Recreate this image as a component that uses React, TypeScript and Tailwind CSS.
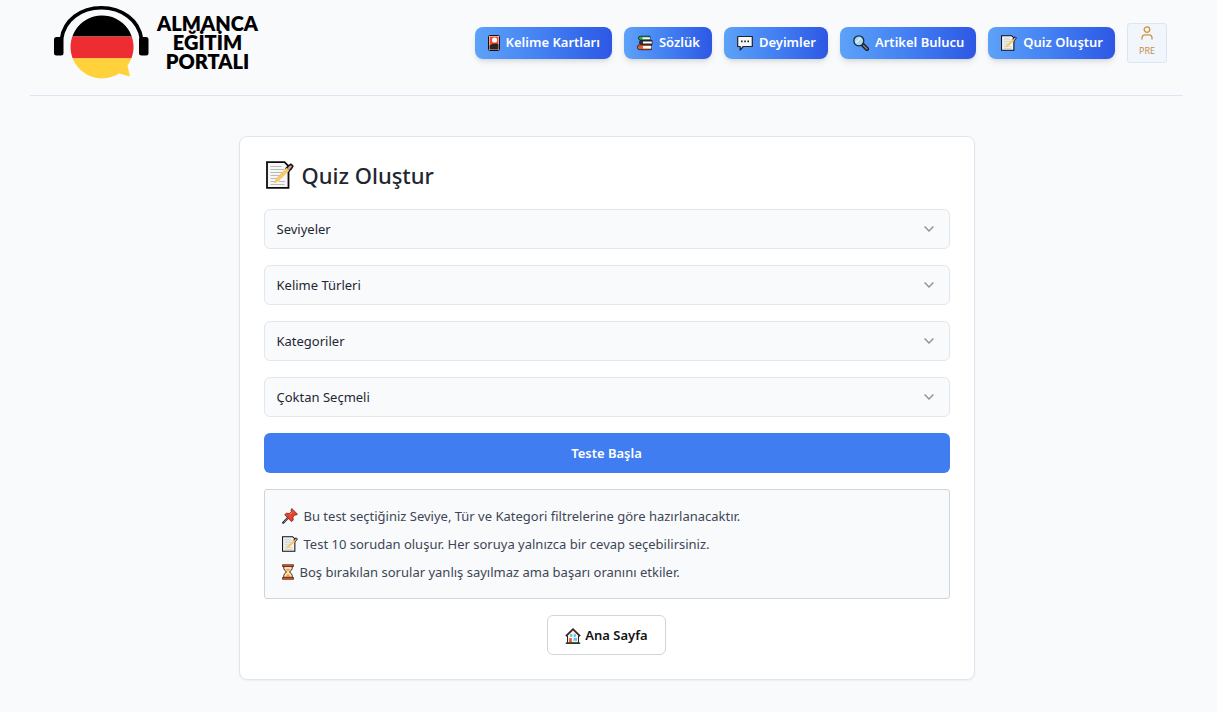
import React from 'react';

type IconProps = { className?: string };

function CardIcon({ className = '' }: IconProps) {
  return (
    <svg viewBox="0 0 12 16" className={className} aria-hidden="true">
      <rect x="0.5" y="0.5" width="11" height="15" rx="1" fill="#e8e4e2" stroke="#171312" />
      <rect x="1.6" y="1.6" width="8.8" height="12.8" fill="#ee4a2f" />
      <path d="M1.6 14.4V10.5Q5 7.6 10.4 9v5.4z" fill="#2b2525" />
      <circle cx="6.6" cy="5" r="2.6" fill="#fff" />
    </svg>
  );
}

function BooksIcon({ className = '' }: IconProps) {
  return (
    <svg viewBox="0 0 16 16" className={className} aria-hidden="true">
      <path d="M3.500 1.200h9.500v4H3.500a2 2 0 0 1 0-4z" fill="#2fa84f" stroke="#16181c" strokeWidth=".8" />
      <path d="M5.500 2.400H13v1.800H5.500z" fill="#fff" />
      <path d="M4.500 5.400H15v4.200H4.500a2 2 0 0 1 0-4.200z" fill="#27313f" stroke="#16181c" strokeWidth=".8" />
      <path d="M6 6.500h8.800v2H6z" fill="#fff" />
      <path d="M2.800 9.800h11.700v4.900H2.800a2.400 2.400 0 0 1 0-4.900z" fill="#ef5a2a" stroke="#16181c" strokeWidth=".8" />
      <path d="M6 11h8.300v2.500H6z" fill="#fff" />
    </svg>
  );
}

function SpeechIcon({ className = '' }: IconProps) {
  return (
    <svg viewBox="0 0 16 16" className={className} aria-hidden="true">
      <path d="M.7 1.500h14.600v10H6.200L3.200 15v-3.500H.7z" fill="#f8f8f8" stroke="#20232a" strokeWidth="1.200" strokeLinejoin="round" />
      <path d="M4 5.600h1.600v1.600H4zM7.200 5.600h1.600v1.600H7.200zM10.400 5.600H12v1.600h-1.600z" fill="#20232a" />
    </svg>
  );
}

function SearchIcon({ className = '' }: IconProps) {
  return (
    <svg viewBox="0 0 16 16" className={className} aria-hidden="true">
      <path d="M9 9l5 5" stroke="#17191d" strokeWidth="4" strokeLinecap="round" />
      <path d="M10.4 10.4l3.5 3.5" stroke="#77787c" strokeWidth="1.7" strokeLinecap="round" />
      <circle cx="5.8" cy="5.8" r="5" fill="#a5dcf5" stroke="#1d2733" strokeWidth="1.3" />
      <path d="M3 7.6L7.6 3" stroke="#d9f2fd" strokeWidth="1.6" />
    </svg>
  );
}

function MemoIcon({ className = '' }: IconProps) {
  return (
    <svg viewBox="0 0 28 28" className={className} aria-hidden="true">
      <path d="M1 1.2h17.500l4 4V26.800H1z" fill="#f6f6f6" stroke="#0c0c0c" strokeWidth="1.800" />
      <path d="M4.500 5.500h11M4.500 8.500h14M4.500 11.500h13M4.500 14.500h10M4.500 17.500h8M4.500 20.500h6M13 20.500h6M4.500 23.500h14" stroke="#b9b9bb" />
      <path d="M22.700 4.600l2.200-1.400 2 2-1.400 2.400-2.600 2.600-2.800-2.800z" fill="#c9a39c" stroke="#171313" strokeWidth="1.600" />
      <path d="M20.500 6.800l2.800 2.800L12.200 20.400 8 22.400l1.700-4.400z" fill="#f7c968" />
    </svg>
  );
}

function PinIcon({ className = '' }: IconProps) {
  return (
    <svg viewBox="0 0 16 16" className={className} aria-hidden="true">
      <path d="M6.300 9.400L1.200 14.800" stroke="#26282c" strokeWidth="2.200" strokeLinecap="round" />
      <path d="M5.800 10L1.600 14.400" stroke="#a9adb3" strokeWidth=".8" />
      <path d="M9.800.500l5.700 5.700-1.700.9-1-.2-1.900 2.200.4 2.800-1.700 1.800L2.700 6.800l1.700-1.600 2.900.4L9.300 3.600 9 2.200z" fill="#e8412c" stroke="#5a1a14" strokeWidth=".7" strokeLinejoin="round" />
      <path d="M7.600 6.500l3-2.600" stroke="#ff8c76" />
    </svg>
  );
}

function HourglassIcon({ className = '' }: IconProps) {
  return (
    <svg viewBox="0 0 12 16" className={className} aria-hidden="true">
      <path d="M1.800 2h8.400v2.500Q10 6.500 7.300 8q2.700 1.500 2.900 3.500V14H1.800v-2.500Q2 9.500 4.700 8 2 6.500 1.800 4.500z" fill="#fdeccb" stroke="#47241a" />
      <path d="M3 4.800h6L6 7.500zM6 9.500l3.200 3.700H2.800z" fill="#f6a623" />
      <path d="M.5.700h11v1.900H.5zM.5 13.400h11v1.900H.5z" fill="#e8552d" stroke="#3c1a12" strokeWidth=".7" />
    </svg>
  );
}

function HouseIcon({ className = '' }: IconProps) {
  return (
    <svg viewBox="0 0 16 16" className={className} aria-hidden="true">
      <path d="M2.500 7.500L8 2l5.500 5.500V15h-11z" fill="#f4f1ee" stroke="#2b2525" />
      <path d="M.9 8.200L8 1.300l7.100 6.900" fill="none" stroke="#2c1c1a" strokeWidth="1.700" />
      <path d="M2.500 7.200L8 1.900l5.500 5.300" fill="none" stroke="#c98674" strokeWidth=".5" />
      <path d="M4.200 10.200h2.600V15H4.200z" fill="#e8502f" />
      <path d="M8.700 10h3.300v2.800H8.700zM8.700 6.300h2.300v2.400H8.700zM5 6.300h2.300v2.400H5z" fill="#5cc4ef" />
      <path d="M.8 15.200h14.400" stroke="#163c21" strokeWidth="1.500" />
    </svg>
  );
}

function UserIcon({ className = '' }: IconProps) {
  return (
    <svg viewBox="0 0 12 14" className={className} fill="none" stroke="#cf9338" strokeWidth="1.300" strokeLinecap="round" aria-hidden="true">
      <circle cx="6" cy="3.600" r="2.800" />
      <path d="M1 13v-1.200a3 3 0 0 1 3-3h4a3 3 0 0 1 3 3V13" />
    </svg>
  );
}

function Chevron({ className = '' }: IconProps) {
  return (
    <svg viewBox="0 0 10 6" className={className} fill="none" stroke="#8d9096" strokeWidth="1.400" aria-hidden="true">
      <path d="M.6.600L5 5 9.400.600" />
    </svg>
  );
}

function LogoMark({ className = '' }: IconProps) {
  return (
    <svg viewBox="54 6 95 75" className={className} aria-hidden="true">
      <clipPath id="disc">
        <path d="M127.500 66.500L130 77.500 119 74.500A31.500 31.500 0 1 1 127.500 66.500z" />
      </clipPath>
      <g clipPath="url(#disc)">
        <path d="M68 15h68v22.600H68z" fill="#000" />
        <path d="M68 37.500h68v22H68z" fill="#ee2d32" />
        <path d="M68 59.300h68V82H68z" fill="#ffd23c" />
      </g>
      <path d="M61.500 40C64 21 81 8.700 101.300 8.700S139 21 141.500 40" fill="none" stroke="#000" strokeWidth="3.600" />
      <rect x="54" y="38" width="9.500" height="18.500" rx="2.500" />
      <rect x="139" y="38" width="9.500" height="18.500" rx="2.500" />
    </svg>
  );
}

const navItems = [
  { label: 'Kelime Kartları', Icon: CardIcon, size: 'h-4 w-3' },
  { label: 'Sözlük', Icon: BooksIcon, size: 'size-4' },
  { label: 'Deyimler', Icon: SpeechIcon, size: 'size-4' },
  { label: 'Artikel Bulucu', Icon: SearchIcon, size: 'size-4' },
  { label: 'Quiz Oluştur', Icon: MemoIcon, size: 'size-4' },
];

const filters = ['Seviyeler', 'Kelime Türleri', 'Kategoriler', 'Çoktan Seçmeli'];

const notes = [
  { text: 'Bu test seçtiğiniz Seviye, Tür ve Kategori filtrelerine göre hazırlanacaktır.', Icon: PinIcon, size: 'size-4' },
  { text: 'Test 10 sorudan oluşur. Her soruya yalnızca bir cevap seçebilirsiniz.', Icon: MemoIcon, size: 'size-4' },
  { text: 'Boş bırakılan sorular yanlış sayılmaz ama başarı oranını etkiler.', Icon: HourglassIcon, size: 'h-4 w-3' },
];

export default function App() {
  return (
    <div className="min-h-screen bg-[#f9fafc] pr-1 font-['Noto_Sans','Open_Sans',sans-serif] text-[13px] text-[#1f2733]">
      <header className="mx-auto flex max-w-[1153px] items-center justify-between border-b border-[#dfe4f0] px-4 pt-[5px] pb-[15px]">
        <a href="#" className="ml-2 flex items-center gap-2 text-black">
          <LogoMark className="h-[75px] w-[95px]" />
          <span className="text-center font-['Lato',sans-serif] text-[20px] leading-[19px] font-extrabold">
            ALMANCA
            <br />
            EĞİTİM
            <br />
            PORTALI
          </span>
        </a>
        <nav className="flex items-center gap-3">
          {navItems.map(({ label, Icon, size }) => (
            <button
              key={label}
              type="button"
              className="flex h-8 items-center gap-1.5 rounded-lg bg-linear-to-r from-[#5da2f8] via-[#437ff2] to-[#2e57e4] pr-3 pl-[13px] font-semibold whitespace-nowrap text-white shadow-md"
            >
              <Icon className={size} />
              {label}
            </button>
          ))}
          <button
            type="button"
            className="flex size-10 flex-col items-center justify-center gap-[5px] rounded-[3px] border border-[#dbe5f3] bg-[#f1f6fd] pb-[3px] text-[9px] leading-3 text-[#c98d3b]"
          >
            <UserIcon className="h-3.5 w-3" />
            PRE
          </button>
        </nav>
      </header>

      <main className="mx-auto max-w-3xl px-4 py-10">
        <section className="rounded-lg border border-[#e2e6ec] bg-white p-6 shadow-xs">
          <h1 className="mb-5 flex items-center gap-2 pl-0.5 text-[22px] leading-7 font-medium">
            <MemoIcon className="size-7" />
            Quiz Oluştur
          </h1>
          <div className="flex flex-col gap-4">
            {filters.map((name) => (
              <div key={name} className="relative">
                <select
                  aria-label={name}
                  className="block h-10 w-full appearance-none rounded-md border border-[#e3e6eb] bg-[#f9fafc] px-3 pt-0.5 text-[13px]"
                >
                  <option>{name}</option>
                </select>
                <Chevron className="pointer-events-none absolute top-[17px] right-4 h-1.5 w-2.5" />
              </div>
            ))}
            <button type="button" className="h-10 rounded-md bg-[#3f7df1] pt-0.5 font-semibold text-white">
              Teste Başla
            </button>
            <ul className="rounded-[3px] border border-[#d1d5db] bg-[#f9fafc] px-[17px] py-3 leading-7 text-[#3d4656]">
              {notes.map(({ text, Icon, size }) => (
                <li key={text} className="flex items-center gap-1.5">
                  <Icon className={`shrink-0 ${size}`} />
                  {text}
                </li>
              ))}
            </ul>
            <button
              type="button"
              className="flex h-10 items-center gap-1 self-center rounded-md border border-[#d1d5db] bg-white px-[17px] pt-0.5 font-semibold text-[#111]"
            >
              <HouseIcon className="size-4" />
              Ana Sayfa
            </button>
          </div>
        </section>
      </main>
    </div>
  );
}
